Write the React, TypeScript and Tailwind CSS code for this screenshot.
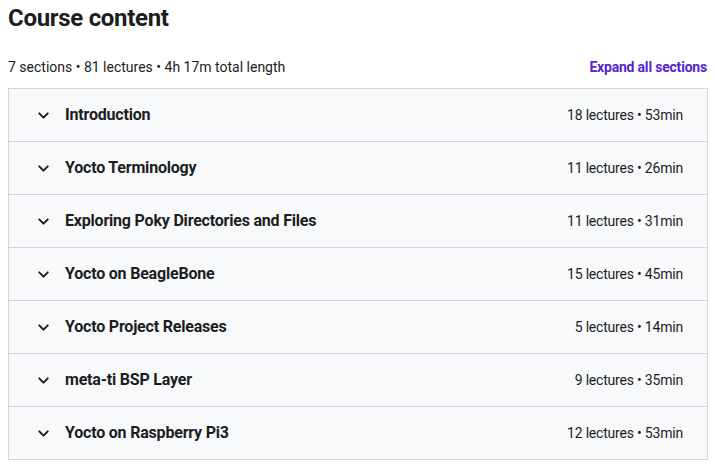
import { ChevronDown } from 'lucide-react';

const sections = [
  { title: 'Introduction', meta: '18 lectures • 53min' },
  { title: 'Yocto Terminology', meta: '11 lectures • 26min' },
  { title: 'Exploring Poky Directories and Files', meta: '11 lectures • 31min' },
  { title: 'Yocto on BeagleBone', meta: '15 lectures • 45min' },
  { title: 'Yocto Project Releases', meta: '5 lectures • 14min' },
  { title: 'meta-ti BSP Layer', meta: '9 lectures • 35min' },
  { title: 'Yocto on Raspberry Pi3', meta: '12 lectures • 53min' },
];

export default function App() {
  return (
    <div className="w-[715px] h-[467px] bg-white px-2 text-[#1c1d1f]" style={{ fontFamily: 'Roboto, "Liberation Sans", sans-serif' }}>
      <h2 className="pt-[3px] text-[24px] leading-[30px] font-bold tracking-[-0.3px] text-[#1c1d1f]">Course content</h2>

      <div className="mt-[24px] flex items-center justify-between h-[20px]">
        <span className="text-[14px] text-[#1c1d1f]">7 sections • 81 lectures • 4h 17m total length</span>
        <button className="text-[14px] font-bold tracking-[-0.2px] text-[#5624d0]">Expand all sections</button>
      </div>

      {/* section list */}
      <div className="mt-[11px] border-x border-b border-[#d1d7dc] w-[700px]">
        {sections.map((s) => (
          <div
            key={s.title}
            className="flex items-center justify-between h-[53px] bg-[#f7f9fa] border-t border-[#d1d7dc] pl-[26px] pr-[24px]"
          >
            <div className="flex items-center">
              <ChevronDown className="w-[17px] h-[17px] mt-[1px] text-[#1c1d1f]" strokeWidth={2.75} />
              <span className="ml-[13px] text-[16px] font-bold tracking-[-0.2px] text-[#1c1d1f]">{s.title}</span>
            </div>
            <span className="text-[14px] tracking-[-0.2px] text-[#1c1d1f]">{s.meta}</span>
          </div>
        ))}
      </div>
    </div>
  );
}
